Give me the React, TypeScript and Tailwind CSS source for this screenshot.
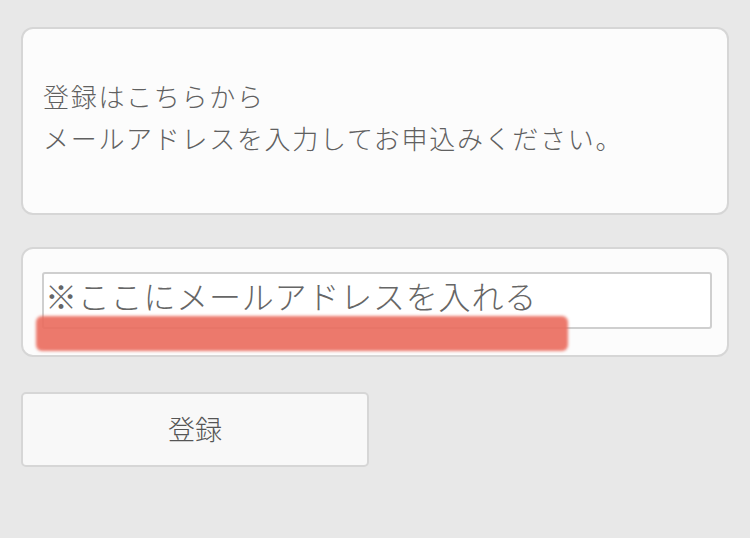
export default function App() {
  const font = { fontFamily: '"Noto Sans CJK JP", "Noto Sans", sans-serif' };

  return (
    <div
      className="h-[538px] w-[750px] bg-[#e8e8e8] pt-[27px] pl-[21px] pr-[21px] text-[#606060]"
      style={font}
    >
      {/* 案内 */}
      <div className="flex h-[188px] items-center rounded-[12px] border-2 border-[#d6d6d6] bg-[#fcfcfc] pl-[20px]">
        <p className="mt-[-8px] text-[26px] font-light leading-[42px] tracking-[1.7px]">
          登録はこちらから
          <br />
          メールアドレスを入力してお申込みください。
        </p>
      </div>

      {/* メール入力 */}
      <div className="relative mt-[32px] h-[110px] rounded-[12px] border-2 border-[#d6d6d6] bg-[#fcfcfc] pl-[19px] pr-[15px] pt-[23px]">
        <input
          type="email"
          placeholder="※ここにメールアドレスを入れる"
          className="block h-[57px] w-full rounded-[3px] border-2 border-[#cfcfcf] bg-white px-[1px] pb-[12px] text-[32px] font-light leading-none tracking-[0.8px] text-[#666666] placeholder:text-[#666666] focus:outline-none"
          style={font}
        />
        <div className="absolute left-[13px] top-[67px] h-[35px] w-[532px] rounded-[6px] bg-[#ea6a5c]/90 blur-[1.5px]" />
      </div>

      {/* 登録ボタン */}
      <button
        className="mt-[35px] flex h-[75px] w-[348px] items-center justify-center rounded-[5px] border-2 border-[#d6d6d6] bg-[#f8f8f8] text-[27px] font-light text-[#555555]"
        style={font}
      >
        登録
      </button>
    </div>
  );
}
